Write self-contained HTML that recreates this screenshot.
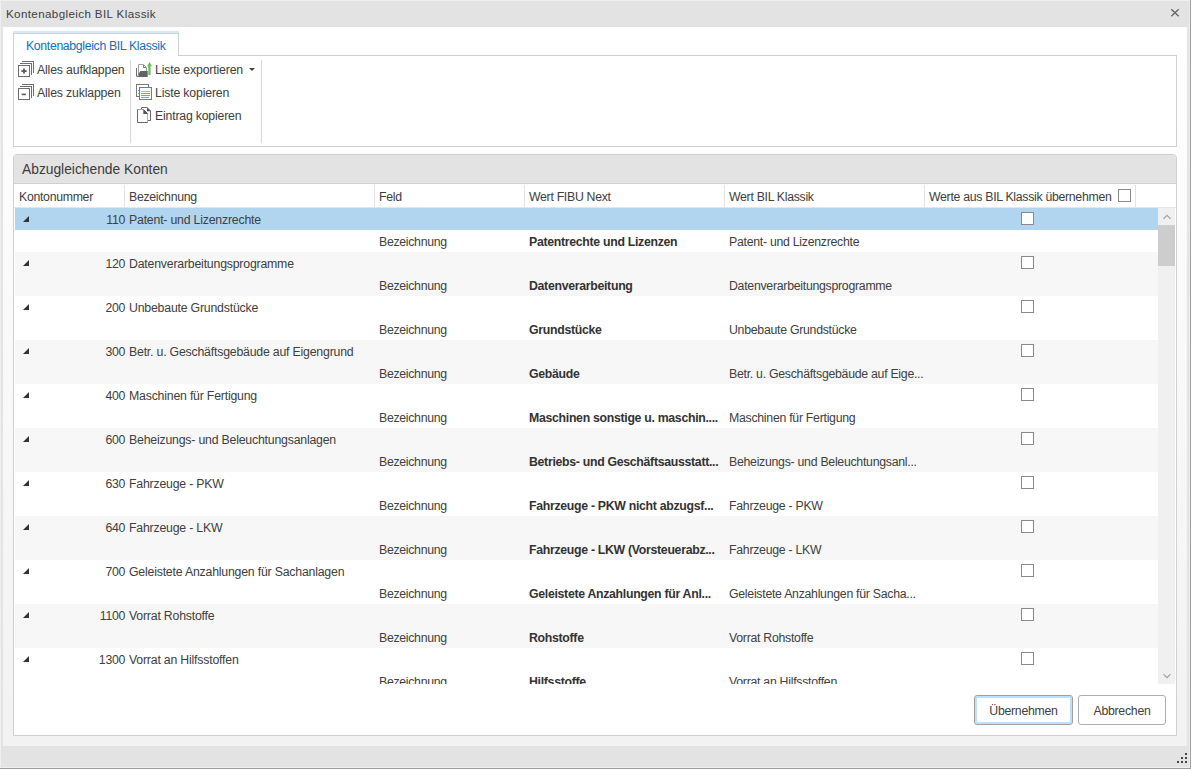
<!DOCTYPE html>
<html><head><meta charset="utf-8">
<style>
*{box-sizing:border-box}
html,body{margin:0;padding:0}
body{width:1191px;height:769px;position:relative;overflow:hidden;background:#efefef;font-family:"Liberation Sans",sans-serif;color:#404040}
.a{position:absolute}
.t{position:absolute;white-space:nowrap;line-height:1}
.ic{position:absolute}
#frame{position:absolute;left:1px;top:1px;width:1188px;height:766px;background:#e3e3e3}
#rsh{position:absolute;left:1190px;top:0;width:1px;height:769px;background:#9c9c9c}
#bsh{position:absolute;left:0;top:768px;width:1191px;height:1px;background:#9c9c9c}
#body{position:absolute;left:3px;top:27px;width:1184px;height:719px;background:linear-gradient(#ffffff,#f2f2f2)}
.r{position:absolute;left:0;width:1144px;height:22px}
.r span{position:absolute;white-space:nowrap;font-size:12.3px;letter-spacing:-0.3px;line-height:22px;top:1px}
.r .num{right:1034px;text-align:right}
.r .nm{left:114px;letter-spacing:-0.2px !important}
.r .c2{left:364px}
.r .c3{left:514px;font-weight:bold;color:#333}
.r .c4{left:714px;letter-spacing:-0.27px !important}
.tri{position:absolute;left:8px;top:8px;width:0;height:0;border-left:6px solid transparent;border-bottom:6px solid #333}
.cb{position:absolute;width:13px;height:13px;border:1px solid #8a8a8a;background:#fff}
.hd{position:absolute;top:1px;height:22px;border-left:1px solid #e3e3e3}
.hd span{position:absolute;left:4px;top:1px;font-size:12.3px;letter-spacing:-0.3px;line-height:23px;white-space:nowrap}
.btn{position:absolute;top:695px;height:30px;border:1px solid #adadad;border-radius:3px;background:#fff;font-size:12.3px;letter-spacing:-0.27px;text-align:center;line-height:30px}
</style></head><body>
<div id="frame"></div>
<div id="rsh"></div><div id="bsh"></div>
<div class="t" style="left:6px;top:8px;font-size:11.6px;letter-spacing:0.38px;color:#404040">Kontenabgleich BIL Klassik</div>
<svg class="a" style="left:1170px;top:8px" width="10" height="10" viewBox="0 0 10 10"><path d="M1.3 1.3L8.7 8.2M8.7 1.3L1.3 8.2" stroke="#6a6a6a" stroke-width="1.5"/></svg>
<div id="body"></div>

<!-- tab -->
<div class="a" style="left:13px;top:31px;width:166px;height:2px;background:#d6eaf8"></div>
<div class="a" style="left:13px;top:33px;width:166px;height:23px;border:1px solid #d0d0d0;border-bottom:none;background:#fff"></div>
<div class="t" style="left:26px;top:40px;font-size:12.3px;letter-spacing:-0.35px;color:#0f6fc6">Kontenabgleich BIL Klassik</div>
<!-- ribbon -->
<div class="a" style="left:178px;top:55px;width:999px;height:1px;background:#d0d0d0"></div>
<div class="a" style="left:13px;top:56px;width:1164px;height:91px;border:1px solid #d0d0d0;border-top:none;background:#fff"></div>
<div class="a" style="left:130px;top:60px;width:1px;height:83px;background:#d8d8d8"></div>
<div class="a" style="left:261px;top:60px;width:1px;height:83px;background:#d8d8d8"></div>
<svg class="ic" style="left:18px;top:61px" width="16" height="16" viewBox="0 0 16 16" shape-rendering="crispEdges">
<path d="M4 0.5H15.5V12" fill="none" stroke="#6e6e6e"/>
<path d="M2 2.5H13.5V14" fill="none" stroke="#6e6e6e"/>
<rect x="0.5" y="4.5" width="11" height="11" fill="#fff" stroke="#6e6e6e"/>
<path d="M3.4 10.1H8.6M6 7.6V12.6" stroke="#5a5a5a" stroke-width="1.8" shape-rendering="geometricPrecision"/>
</svg>
<svg class="ic" style="left:18px;top:84px" width="16" height="16" viewBox="0 0 16 16" shape-rendering="crispEdges">
<path d="M4 0.5H15.5V12" fill="none" stroke="#6e6e6e"/>
<path d="M2 2.5H13.5V14" fill="none" stroke="#6e6e6e"/>
<rect x="0.5" y="4.5" width="11" height="11" fill="#fff" stroke="#6e6e6e"/>
<path d="M3.6 10.4H7.9" stroke="#5a5a5a" stroke-width="1.6" shape-rendering="geometricPrecision"/>
</svg>
<svg class="ic" style="left:136px;top:62px" width="17" height="16" viewBox="0 0 17 16">
<path d="M2.5 13V2.5H7.5L10.5 5.5V9" fill="#fff" stroke="#a0a0a0"/>
<path d="M7.5 3V5.5H10" fill="none" stroke="#7a7a7a"/>
<path d="M0.5 6V14.5" stroke="#6e6e6e"/>
<path d="M0.6 15H11.2Q11.7 15 11.7 14.4V9H4.3Z" fill="#646464"/>
<path d="M1.6 13.4L2.4 12.2V14.2H1.6Z" fill="#fff"/>
<path d="M12.3 13V4.2H11L13.5 0L16 4.2H14.6V13Z" fill="#6cbd5c"/>
</svg>
<svg class="ic" style="left:136px;top:84px" width="17" height="17" viewBox="0 0 17 17">
<rect x="0.5" y="0.5" width="12" height="12" fill="#fff" stroke="#7a7a7a"/>
<path d="M2 6.5H4M2 9.5H4" stroke="#6ea5d8" stroke-width="1"/>
<rect x="3.5" y="3.5" width="12" height="12" fill="#fff" stroke="#7a7a7a"/>
<path d="M5 7.5H14" stroke="#b9b9b9"/>
<path d="M5 9.5H14M5 11.5H14M5 13.5H13" stroke="#6ea5d8"/>
</svg>
<svg class="ic" style="left:137px;top:107px" width="15" height="17" viewBox="0 0 15 17">
<path d="M4.5 2V0.5H10L13.5 4V13.5H10.5" fill="#fff" stroke="#6a6a6a"/>
<path d="M10 0.3L13.7 4V4.3H10Z" fill="#555"/>
<path d="M0.5 15.5V2.5H6.5L10.5 6.5V15.5Z" fill="#fff" stroke="#6a6a6a"/>
<path d="M0.5 2.5H6.5" stroke="#a8a8a8"/>
<path d="M10.5 7V15" stroke="#b0b0b0"/>
<path d="M6.3 2.3L10.7 6.7V7H6.3Z" fill="#555"/>
</svg>
<div class="t" style="left:37px;top:64px;font-size:12.3px;letter-spacing:-0.17px">Alles aufklappen</div>
<div class="t" style="left:37px;top:87px;font-size:12.3px;letter-spacing:-0.17px">Alles zuklappen</div>
<div class="t" style="left:155px;top:64px;font-size:12.3px;letter-spacing:-0.17px">Liste exportieren</div>
<div class="a" style="left:249px;top:68px;width:0;height:0;border-left:3px solid transparent;border-right:3px solid transparent;border-top:3px solid #444"></div>
<div class="t" style="left:155px;top:87px;font-size:12.3px;letter-spacing:-0.17px">Liste kopieren</div>
<div class="t" style="left:155px;top:110px;font-size:12.3px;letter-spacing:-0.2px">Eintrag kopieren</div>

<!-- group container -->
<div class="a" style="left:13px;top:154px;width:1164px;height:582px;border:1px solid #d0d0d0;border-radius:4px 4px 0 0;background:#fff;overflow:hidden">
  <div class="a" style="left:0;top:0;width:1162px;height:29px;background:#e3e3e3;border-bottom:1px solid #d0d0d0"></div>
  <div class="t" style="left:8px;top:8px;font-size:13.8px;color:#3c3c3c">Abzugleichende Konten</div>
  <!-- grid header -->
  <div class="a" style="left:0;top:29px;width:1162px;height:24px;border-bottom:1px solid #e6e6e6">
    <div class="hd" style="left:0;width:110px;border-left:none"><span style="left:5px">Kontonummer</span></div>
    <div class="hd" style="left:110px;width:250px"><span>Bezeichnung</span></div>
    <div class="hd" style="left:360px;width:150px"><span>Feld</span></div>
    <div class="hd" style="left:510px;width:200px"><span>Wert FIBU Next</span></div>
    <div class="hd" style="left:710px;width:200px"><span>Wert BIL Klassik</span></div>
    <div class="hd" style="left:910px;width:211px"><span>Werte aus BIL Klassik übernehmen</span></div>
    <div class="hd" style="left:1121px;width:41px"></div>
    <i class="cb" style="left:1104px;top:5px"></i>
  </div>
  <!-- body -->
  <div class="a" style="left:1px;top:53px;width:1144px;height:476px;overflow:hidden">
<div class="r" style="top:0px;background:#b1d5ef"><i class="tri"></i><span class="num">110</span><span class="nm">Patent- und Lizenzrechte</span><i class="cb" style="left:1006px;top:4px"></i></div>
<div class="r" style="top:22px;background:#ffffff"><span class="c2">Bezeichnung</span><span class="c3">Patentrechte und Lizenzen</span><span class="c4">Patent- und Lizenzrechte</span></div>
<div class="r" style="top:44px;background:#f7f7f7"><i class="tri"></i><span class="num">120</span><span class="nm">Datenverarbeitungsprogramme</span><i class="cb" style="left:1006px;top:4px"></i></div>
<div class="r" style="top:66px;background:#f7f7f7"><span class="c2">Bezeichnung</span><span class="c3">Datenverarbeitung</span><span class="c4">Datenverarbeitungsprogramme</span></div>
<div class="r" style="top:88px;background:#ffffff"><i class="tri"></i><span class="num">200</span><span class="nm">Unbebaute Grundstücke</span><i class="cb" style="left:1006px;top:4px"></i></div>
<div class="r" style="top:110px;background:#ffffff"><span class="c2">Bezeichnung</span><span class="c3">Grundstücke</span><span class="c4">Unbebaute Grundstücke</span></div>
<div class="r" style="top:132px;background:#f7f7f7"><i class="tri"></i><span class="num">300</span><span class="nm">Betr. u. Geschäftsgebäude auf Eigengrund</span><i class="cb" style="left:1006px;top:4px"></i></div>
<div class="r" style="top:154px;background:#f7f7f7"><span class="c2">Bezeichnung</span><span class="c3">Gebäude</span><span class="c4">Betr. u. Geschäftsgebäude auf Eige...</span></div>
<div class="r" style="top:176px;background:#ffffff"><i class="tri"></i><span class="num">400</span><span class="nm">Maschinen für Fertigung</span><i class="cb" style="left:1006px;top:4px"></i></div>
<div class="r" style="top:198px;background:#ffffff"><span class="c2">Bezeichnung</span><span class="c3">Maschinen sonstige u. maschin....</span><span class="c4">Maschinen für Fertigung</span></div>
<div class="r" style="top:220px;background:#f7f7f7"><i class="tri"></i><span class="num">600</span><span class="nm">Beheizungs- und Beleuchtungsanlagen</span><i class="cb" style="left:1006px;top:4px"></i></div>
<div class="r" style="top:242px;background:#f7f7f7"><span class="c2">Bezeichnung</span><span class="c3">Betriebs- und Geschäftsausstatt...</span><span class="c4">Beheizungs- und Beleuchtungsanl...</span></div>
<div class="r" style="top:264px;background:#ffffff"><i class="tri"></i><span class="num">630</span><span class="nm">Fahrzeuge - PKW</span><i class="cb" style="left:1006px;top:4px"></i></div>
<div class="r" style="top:286px;background:#ffffff"><span class="c2">Bezeichnung</span><span class="c3">Fahrzeuge - PKW nicht abzugsf...</span><span class="c4">Fahrzeuge - PKW</span></div>
<div class="r" style="top:308px;background:#f7f7f7"><i class="tri"></i><span class="num">640</span><span class="nm">Fahrzeuge - LKW</span><i class="cb" style="left:1006px;top:4px"></i></div>
<div class="r" style="top:330px;background:#f7f7f7"><span class="c2">Bezeichnung</span><span class="c3">Fahrzeuge - LKW (Vorsteuerabz...</span><span class="c4">Fahrzeuge - LKW</span></div>
<div class="r" style="top:352px;background:#ffffff"><i class="tri"></i><span class="num">700</span><span class="nm">Geleistete Anzahlungen für Sachanlagen</span><i class="cb" style="left:1006px;top:4px"></i></div>
<div class="r" style="top:374px;background:#ffffff"><span class="c2">Bezeichnung</span><span class="c3">Geleistete Anzahlungen für Anl...</span><span class="c4">Geleistete Anzahlungen für Sacha...</span></div>
<div class="r" style="top:396px;background:#f7f7f7"><i class="tri"></i><span class="num">1100</span><span class="nm">Vorrat Rohstoffe</span><i class="cb" style="left:1006px;top:4px"></i></div>
<div class="r" style="top:418px;background:#f7f7f7"><span class="c2">Bezeichnung</span><span class="c3">Rohstoffe</span><span class="c4">Vorrat Rohstoffe</span></div>
<div class="r" style="top:440px;background:#ffffff"><i class="tri"></i><span class="num">1300</span><span class="nm">Vorrat an Hilfsstoffen</span><i class="cb" style="left:1006px;top:4px"></i></div>
<div class="r" style="top:462px;background:#ffffff"><span class="c2">Bezeichnung</span><span class="c3">Hilfsstoffe</span><span class="c4">Vorrat an Hilfsstoffen</span></div>
  </div>
  <!-- scrollbar -->
  <div class="a" style="left:1144px;top:53px;width:17px;height:476px;background:#f0f0f0"></div>
  <div class="a" style="left:1144px;top:70px;width:17px;height:41px;background:#cdcdcd"></div>
  <svg class="a" style="left:1149px;top:59px" width="8" height="6" viewBox="0 0 8 6"><path d="M0.5 4.8L4 1.3L7.5 4.8" fill="none" stroke="#a0a0a0" stroke-width="1.2"/></svg>
  <svg class="a" style="left:1149px;top:518px" width="8" height="6" viewBox="0 0 8 6"><path d="M0.5 1.2L4 4.7L7.5 1.2" fill="none" stroke="#a0a0a0" stroke-width="1.2"/></svg>
</div>
<!-- buttons -->
<div class="btn" style="left:974px;width:99px;border-color:#a0a0a0;box-shadow:inset 0 0 0 2px #bfe0f9">Übernehmen</div>
<div class="btn" style="left:1078px;width:88px">Abbrechen</div>
<!-- status bar grip -->
<div class="a" style="left:1185px;top:753px;width:2px;height:2px;background:#444"></div>
<div class="a" style="left:1181px;top:757px;width:2px;height:2px;background:#444"></div>
<div class="a" style="left:1185px;top:757px;width:2px;height:2px;background:#444"></div>
<div class="a" style="left:1177px;top:761px;width:2px;height:2px;background:#444"></div>
<div class="a" style="left:1181px;top:761px;width:2px;height:2px;background:#444"></div>
<div class="a" style="left:1185px;top:761px;width:2px;height:2px;background:#444"></div>
</body></html>
